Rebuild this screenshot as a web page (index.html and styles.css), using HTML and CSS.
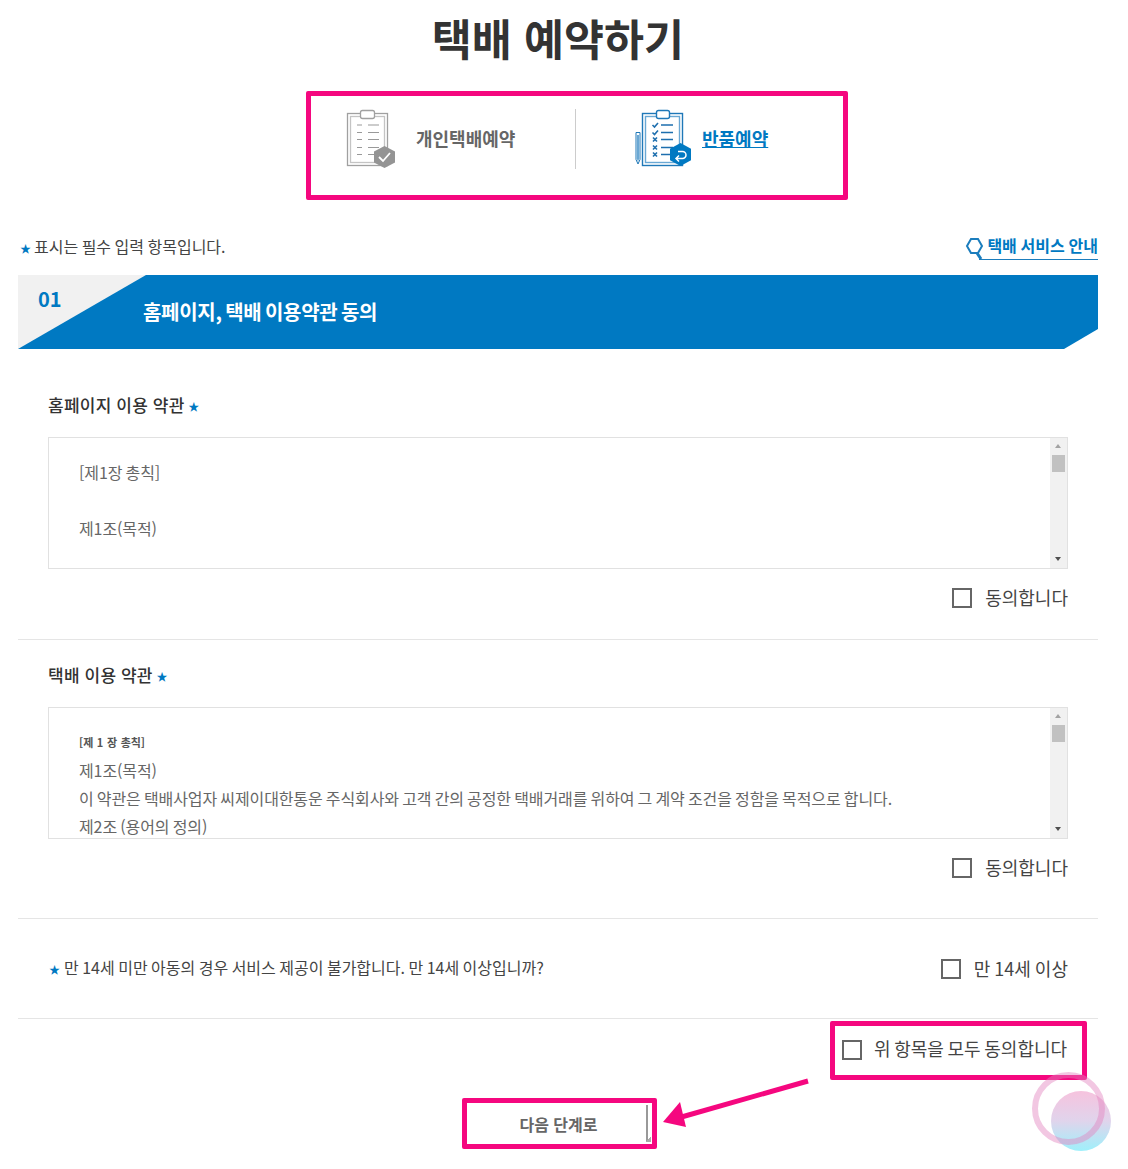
FILE: index.html
```html
<!DOCTYPE html>
<html lang="ko">
<head>
<meta charset="utf-8"/>
<title>택배 예약하기</title>
<link rel="stylesheet" href="styles.css">
</head>
<body>
<div class="page">

<h1 class="title">택배 예약하기</h1>

<div class="tabs">
  <a class="tab tab-person" href="#">
    <svg class="tab-icon" width="56" height="64" viewBox="0 0 56 64">
      <g fill="none" stroke="#a0a0a0" stroke-width="1.3">
        <rect x="7.500" y="6.500" width="40" height="52" />
        <rect x="10.500" y="9.500" width="34" height="46" stroke="#c4c4c4" />
        <rect x="20.500" y="3.500" width="14" height="8" rx="2" fill="#fff" />
      </g>
      <path d="M17 18h5M28 18h11M17 25.500h5M28 25.500h11M17 32.500h5M28 32.500h11M17 40.500h5M28 40.500h11M17 47.500h5M28 47.500h8" stroke="#999" stroke-width="1.200" />
      <path d="M44.500 39l10.500 5.500v11L44.500 61 34 55.500v-11z" fill="#949494" />
      <path d="M39 50l4 4 7-8" fill="none" stroke="#fff" stroke-width="1.800" />
    </svg>
    <span class="tab-label">개인택배예약</span>
  </a>
  <a class="tab tab-return" href="#">
    <svg class="tab-icon" width="60" height="64" viewBox="0 0 60 64">
      <g fill="none" stroke="#1f78b8" stroke-width="1.400">
        <rect x="10.500" y="6.500" width="40" height="52" />
        <rect x="13.500" y="9.500" width="34" height="46" stroke="#6aa8d4" />
        <rect x="24.500" y="3.500" width="13" height="8" rx="2" fill="#fff" />
        <path d="M4 25.500h4v27l-2 4.500-2-4.500z" stroke-width="1" />
      </g>
      <path d="M5 28h2v24l-1 3-1-3z" fill="#6aa8d4" />
      <g stroke="#1e6fae" stroke-width="1.300" fill="none">
        <path d="M29 18h12M29 25.500h12M29 32.500h12M29 40.500h12M29 47.500h9" />
        <path d="M20.500 18l2 2 3.500-4M20.500 25.500l2 2 3.500-4" stroke-width="1.600" />
        <path d="M21 30.500l4 4m0-4l-4 4M21 38.500l4 4m0-4l-4 4M21 45.500l4 4m0-4l-4 4" stroke-width="1.600" />
      </g>
      <path d="M48.500 36l10.500 5.800v11.500L48.500 59 38 53.300V41.800z" fill="#0079c2" />
      <path d="M44 51.500h6.500a3.500 3.500 0 0 0 0-7H46M47 48.500l-3 3 3 3" fill="none" stroke="#fff" stroke-width="1.500" />
    </svg>
    <span class="tab-label tab-label-on">반품예약</span>
  </a>
</div>

<div class="note-row">
  <p class="note"><span class="star">★</span>표시는 필수 입력 항목입니다.</p>
  <a class="guide" href="#">
    <svg class="guide-icon" width="20" height="24" viewBox="0 0 20 24">
      <path d="M6 2h7l4 7-4 7H6L2 9z" fill="none" stroke="#1b7dbd" stroke-width="2" />
      <path d="M12 16l4 6" stroke="#1b7dbd" stroke-width="3" />
    </svg>
    택배 서비스 안내
  </a>
</div>

<div class="banner">
  <span class="banner-num">01</span>
  <h2 class="banner-title">홈페이지, 택배 이용약관 동의</h2>
</div>

<section class="terms terms-first">
  <h3 class="terms-label">홈페이지 이용 약관 <span class="star">★</span></h3>
  <div class="terms-box">
    <div class="terms-text">
      <p>[제1장 총칙]</p>
      <p>&nbsp;</p>
      <p>제1조(목적)</p>
    </div>
    <div class="scroll"><i class="arrow-up"></i><i class="thumb"></i><i class="arrow-down"></i></div>
  </div>
  <label class="agree"><input class="check" type="checkbox"><span class="agree-text">동의합니다</span></label>
</section>

<section class="terms terms-second">
  <h3 class="terms-label">택배 이용 약관 <span class="star">★</span></h3>
  <div class="terms-box">
    <div class="terms-text">
      <p class="terms-small">[제 1 장 총칙]</p>
      <p>제1조(목적)</p>
      <p>이 약관은 택배사업자 씨제이대한통운 주식회사와 고객 간의 공정한 택배거래를 위하여 그 계약 조건을 정함을 목적으로 합니다.</p>
      <p>제2조 (용어의 정의)</p>
    </div>
    <div class="scroll"><i class="arrow-up"></i><i class="thumb"></i><i class="arrow-down"></i></div>
  </div>
  <label class="agree"><input class="check" type="checkbox"><span class="agree-text">동의합니다</span></label>
</section>

<section class="age">
  <p class="age-text"><span class="star">★</span>만 14세 미만 아동의 경우 서비스 제공이 불가합니다. 만 14세 이상입니까?</p>
  <label class="agree agree-age"><input class="check" type="checkbox"><span class="agree-text">만 14세 이상</span></label>
</section>

<div class="all-row">
  <label class="all-box"><input class="check" type="checkbox"><span class="agree-text">위 항목을 모두 동의합니다</span></label>
</div>

<div class="next-box">
  <button class="next" type="button">다음 단계로</button>
  <i class="grip"></i>
</div>

<svg class="pointer" width="160" height="60" viewBox="0 0 160 60">
  <path d="M148 3L18 40" stroke="#f5077f" stroke-width="5" />
  <path d="M3 44l17-20 6 25z" fill="#f5077f" />
</svg>

<div class="touch">
  <i class="touch-fill"></i>
  <i class="touch-ring"></i>
</div>

</div>
</body>
</html>
```

FILE: styles.css
```css
* {
   box-sizing: border-box;
}

body {
   margin: 0;
   background-color: white;
   font-family: "Noto Sans CJK KR", "Noto Sans", sans-serif;
   font-size: 16px;
   color: #444;
}

p, h1, h2, h3 {
   margin: 0;
}

a {
   text-decoration: none;
}

.page {
   position: relative;
   width: 1080px;
   height: 1169px;
   margin-left: 18px;
   overflow: visible;
}

.title {
   height: 76px;
   line-height: 76px;
   margin-bottom: 15px;
   text-align: center;
   font-size: 43.500px;
   font-weight: 700;
   color: #333;
}

/* pink boxes are part of the capture */
.tabs {
   display: flex;
   width: 542px;
   height: 109px;
   margin-left: 288px;
   padding-top: 13px;
   border: 5px solid #f5077f;
   border-radius: 2px;
}

.tab {
   display: flex;
   align-items: center;
   height: 60px;
}

.tab-person {
   width: 265px;
   padding-left: 29px;
   border-right: 1px solid #ccc;
}

.tab-return {
   padding-left: 56px;
}

.tab-icon {
   flex: none;
}

.tab-label {
   margin-top: -2px;
   font-size: 18px;
   font-weight: 700;
   color: #666;
}

.tab-person .tab-label {
   margin-left: 20px;
}

.tab-return .tab-label {
   margin-left: 10px;
}

.tab-label-on {
   color: #0079c2;
   text-decoration: underline;
}

.note-row {
   display: flex;
   justify-content: space-between;
   align-items: flex-start;
   height: 25px;
   margin-top: 35px;
   margin-bottom: 15px;
}

.note {
   height: 24px;
   margin-top: -1px;
   line-height: 24px;
   padding-left: 2px;
   word-spacing: -1px;
}

.star {
   margin-right: 3px;
   font-size: 11px;
   color: #0079c2;
}

.guide {
   position: relative;
   height: 25px;
   padding-left: 8px;
   border-bottom: 1px solid #1b7dbd;
   line-height: 21px;
   font-size: 16px;
   font-weight: 700;
   word-spacing: -0.700px;
   color: #0079c2;
}

.guide-icon {
   position: absolute;
   left: -14px;
   top: 2px;
}

.banner {
   position: relative;
   display: flex;
   height: 74px;
   background-color: #0079c2;
   clip-path: polygon(0 0, 100% 0, 100% 54px, 1046px 100%, 0 100%);
}

.banner::before {
   content: "";
   position: absolute;
   left: 0;
   top: 0;
   width: 128px;
   height: 74px;
   background-color: #f1f1f1;
   clip-path: polygon(0 0, 100% 0, 0 100%);
}

.banner-num {
   position: relative;
   width: 125px;
   padding: 9px 0 0 20px;
   font-size: 20px;
   line-height: 30px;
   font-weight: 700;
   color: #0079c2;
}

.banner-title {
   padding-top: 22px;
   font-size: 20px;
   line-height: 30px;
   font-weight: 700;
   letter-spacing: -0.300px;
   word-spacing: -1.700px;
   color: white;
}

.terms {
   padding: 0 30px;
   border-bottom: 1px solid #e5e5e5;
}

.terms-first {
   padding-top: 44px;
   padding-bottom: 29px;
}

.terms-second {
   padding-top: 23px;
   padding-bottom: 38px;
}

.terms-label {
   height: 24px;
   line-height: 24px;
   font-size: 17px;
   font-weight: 500;
   letter-spacing: 0.250px;
   word-spacing: -0.300px;
   color: #333;
}

.terms-label .star {
   margin-left: -1px;
   margin-right: 0;
   vertical-align: 1px;
}

.terms-box {
   display: flex;
   height: 132px;
   margin-top: 20px;
   border: 1px solid #e1e1e1;
}

.terms-text {
   flex: 1;
   overflow: hidden;
   padding: 20px 30px 0;
   line-height: 28px;
   letter-spacing: -0.100px;
   word-spacing: -1.150px;
   color: #666;
}

.terms-small {
   height: 28px;
   font-size: 11px;
   font-weight: 700;
   letter-spacing: 0;
   word-spacing: 0.500px;
   color: #555;
}

.scroll {
   position: relative;
   flex: none;
   width: 17px;
   background-color: #f1f1f1;
}

.thumb {
   position: absolute;
   left: 2px;
   top: 17px;
   width: 13px;
   height: 17px;
   background-color: #c1c1c1;
}

.arrow-up, .arrow-down {
   position: absolute;
   left: 5px;
   width: 0;
   height: 0;
   border-left: 3.500px solid transparent;
   border-right: 3.500px solid transparent;
}

.arrow-up {
   top: 6px;
   border-bottom: 4px solid #a3a3a3;
}

.arrow-down {
   bottom: 7px;
   border-top: 4px solid #505050;
}

.agree {
   display: flex;
   justify-content: flex-end;
   align-items: center;
   height: 24px;
   margin-top: 17px;
   font-size: 18px;
   word-spacing: -1px;
   color: #444;
}

.agree-age {
   margin-top: 0;
}

.agree-text {
   margin-top: -2px;
}

.check {
   appearance: none;
   width: 20px;
   height: 20px;
   margin: 0 13px 0 0;
   border: 2px solid #666;
   background: white;
}

.age {
   display: flex;
   justify-content: space-between;
   align-items: center;
   height: 100px;
   padding: 0 30px;
   border-bottom: 1px solid #e5e5e5;
}

.age-text {
   height: 24px;
   margin-top: -4px;
   line-height: 24px;
   word-spacing: -1px;
}

.age-text .star {
   margin-right: 4px;
   margin-left: 1px;
}

.all-row {
   display: flex;
   justify-content: flex-end;
   margin-top: 2px;
   padding-right: 11px;
}

.all-box {
   display: flex;
   align-items: center;
   width: 257px;
   height: 59px;
   padding: 0 0 2px 7px;
   border: 5px solid #f5077f;
   border-radius: 2px;
   font-size: 18px;
   word-spacing: -1.400px;
}

.all-box .check {
   margin-right: 12px;
}

.all-box .agree-text {
   margin-top: -3px;
}

.next-box {
   position: relative;
   width: 195px;
   height: 51px;
   margin: 18px 0 0 444px;
   border: 5px solid #f5077f;
   border-radius: 2px;
}

.next {
   display: block;
   width: 181px;
   height: 36px;
   margin-top: 2px;
   padding: 2px 0 0 4px;
   border: 0;
   border-right: 2px solid #999;
   background: white;
   font-family: inherit;
   font-size: 16px;
   font-weight: 700;
   color: #666;
}

.grip {
   position: absolute;
   right: 1px;
   bottom: 2px;
   width: 6px;
   height: 6px;
   background: linear-gradient(135deg, transparent 50%, #aaa 50%);
}

.pointer {
   position: absolute;
   left: 642px;
   top: 1078px;
}

.touch {
   position: absolute;
   left: 1014px;
   top: 1072px;
   width: 80px;
   height: 80px;
}

.touch-fill {
   position: absolute;
   left: 19px;
   top: 19px;
   width: 60px;
   height: 60px;
   border-radius: 50%;
   background: linear-gradient(#f6c3de, #e0d4ec 50%, #9ff0fb);
}

.touch-ring {
   position: absolute;
   left: 0;
   top: 0;
   width: 73px;
   height: 73px;
   border: 6px solid rgba(226, 130, 190, 0.45);
   border-radius: 50%;
}
```
